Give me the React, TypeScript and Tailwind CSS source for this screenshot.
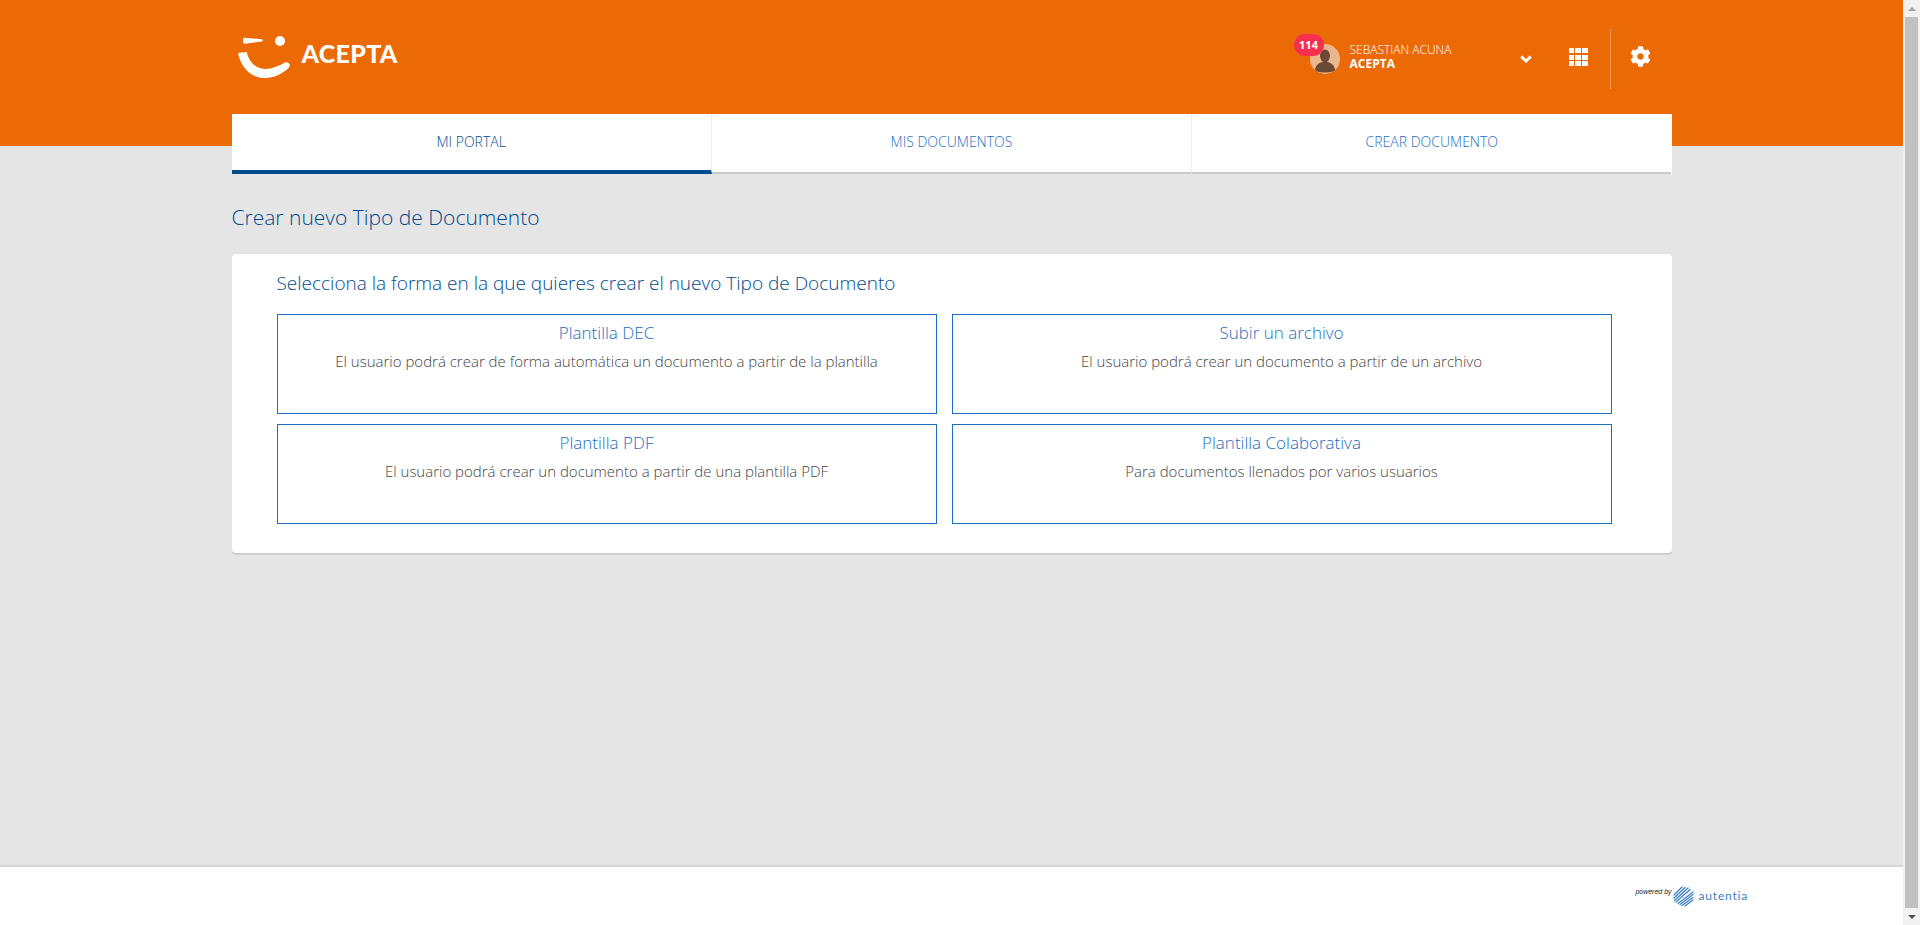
import { FaCog } from 'react-icons/fa';

const tabs = [
  { label: 'MI PORTAL', active: true },
  { label: 'MIS DOCUMENTOS', active: false },
  { label: 'CREAR DOCUMENTO', active: false },
];

const options = [
  { title: 'Plantilla DEC', text: 'El usuario podrá crear de forma automática un documento a partir de la plantilla' },
  { title: 'Subir un archivo', text: 'El usuario podrá crear un documento a partir de un archivo' },
  { title: 'Plantilla PDF', text: 'El usuario podrá crear un documento a partir de una plantilla PDF' },
  { title: 'Plantilla Colaborativa', text: 'Para documentos llenados por varios usuarios' },
];

function Logo() {
  return (
    <svg width="56" height="46" viewBox="0 0 56 46" fill="#fff">
      <path d="M5.3 2.7 L24 4.3 Q25.5 5.5 24 6.5 L7 8.7 Q5 8.5 5 7 Z" />
      <circle cx="42" cy="6" r="5" />
      <path d="M0 18 L8.7 17 C11 27 18 34 27 34 C34 34 41 31 47 27.5 Q49.5 26.5 51.5 29 Q52.5 31 50.5 33 C44 39 36 43 27 43 C13 43 3 33 0 18 Z" />
    </svg>
  );
}

function Avatar() {
  return (
    <div className="w-[30px] h-[30px] rounded-full bg-[#eab78f] overflow-hidden flex justify-center shrink-0">
      <svg width="24" height="30" viewBox="0 0 24 30">
        <ellipse cx="12" cy="12" rx="5" ry="6.5" fill="#6b4a35" />
        <path d="M2 27 C2 21 6 19 9 18 L15 18 C18 19 22 21 22 27 Q12 30 2 27 Z" fill="#6b4a35" />
      </svg>
    </div>
  );
}

function AppsGrid() {
  return (
    <div className="grid grid-cols-3 gap-[1.5px] w-[19px]">
      {Array.from({ length: 9 }).map((_, i) => (
        <div key={i} className="h-[5px] bg-white" />
      ))}
    </div>
  );
}

function AutentiaMark() {
  return (
    <svg width="21" height="21" viewBox="0 0 21 21" fill="none" stroke="#3b7fc4" strokeWidth="1.2" strokeLinecap="round">
      <path d="M1 9 L9 1" />
      <path d="M1 12 L12 1.5" />
      <path d="M1.5 14.5 L15 2" />
      <path d="M3 16 L17 3.5" />
      <path d="M5 17.5 L20 6" />
      <path d="M7 18.5 L20 8.5" />
      <path d="M9 19.5 L20 11.5" />
      <path d="M12 20 L20 14" />
    </svg>
  );
}

export default function App() {
  return (
    <div className="h-[925px] flex overflow-hidden font-['Open_Sans',sans-serif] bg-[#e5e5e5]">
      <div className="w-[1903px] flex flex-col">
        <header className="h-[146px] shrink-0 bg-[#ec6a06]">
          <div className="w-[1440px] mx-auto flex items-start">
            <div className="flex items-start gap-[8px] pl-[6px] pt-[35px]">
              <Logo />
              <span className="mt-[3px] text-[25px] leading-[30px] font-black text-white tracking-[0.3px] font-['Lato',sans-serif]">ACEPTA</span>
            </div>
            <div className="ml-auto flex items-start">
              <div className="relative mt-[44px] flex items-start">
                <span className="absolute -left-[16px] -top-[10px] w-[30px] text-center bg-[#f8304f] text-white text-[11px] leading-[22px] font-bold rounded-full">114</span>
                <Avatar />
                <div className="ml-[10px] w-[170px] -mt-[1px] text-white text-[12px] leading-[14px]">
                  <div className="font-light">SEBASTIAN ACUNA</div>
                  <div className="font-bold">ACEPTA</div>
                </div>
              </div>
              <svg className="mt-[55px]" width="12" height="8" viewBox="0 0 12 8" fill="none">
                <path d="M1.2 1.5 L6 6 L10.8 1.5" stroke="#fff" strokeWidth="3" />
              </svg>
              <div className="mt-[48px] ml-[37px]"><AppsGrid /></div>
              <div className="w-px h-[60px] bg-white/30 mt-[29px] ml-[22px]" />
              <FaCog className="mt-[46px] ml-[19px] mr-[21px]" size={21} color="#fff" />
            </div>
          </div>
        </header>

        <main className="flex-1 w-[1440px] mx-auto">
          <nav className="-mt-[32px] relative flex h-[60px] bg-white">
            {tabs.map((tab) => (
              <div
                key={tab.label}
                className={`flex-1 flex items-center justify-center text-[14px] font-light border-r border-[#eeeeee] last:border-r-0 ${tab.active ? 'border-b-4 border-b-[#004a8f] text-[#004a8f] pb-[2px]' : 'border-b-2 border-b-[#c9c9c9] text-[#1b6ec2] pb-[4px]'}`}
              >
                {tab.label}
              </div>
            ))}
          </nav>

          <h1 className="mt-[30px] text-[21px] leading-[27px] font-light text-[#004a8f]">Crear nuevo Tipo de Documento</h1>

          <section className="mt-[23px] h-[299px] bg-white rounded-[4px] shadow-[0_2px_0_#cfcfcf] pl-[45px] pr-[60px] pt-[17px]">
            <h2 className="text-[19px] leading-[24px] font-light text-[#004a8f]">Selecciona la forma en la que quieres crear el nuevo Tipo de Documento</h2>
            <div className="mt-[19px] grid grid-cols-2 gap-x-[15px] gap-y-[10px]">
              {options.map((opt) => (
                <div key={opt.title} className="h-[100px] border border-[#1b6ec2] text-center pt-[4px]">
                  <div className="text-[17px] leading-[28px] font-light text-[#1b6ec2]">{opt.title}</div>
                  <div className="mt-[4px] text-[15px] leading-[20px] font-light text-[#444444]">{opt.text}</div>
                </div>
              ))}
            </div>
          </section>
        </main>

        <footer className="h-[60px] shrink-0 bg-white border-t-2 border-[#d5d5d5] flex items-center justify-end pr-[155px]">
          <span className="text-[7px] italic font-medium text-[#222222] mr-[1px] -mt-[8px] font-['Liberation_Sans',sans-serif]">powered by</span>
          <AutentiaMark />
          <span className="ml-[5px] text-[12px] tracking-[0.8px] text-[#3b7fc4] font-['Lato',sans-serif]">autentia</span>
        </footer>
      </div>

      <div className="w-[17px] shrink-0 bg-[#f1f1f1] flex flex-col items-center">
        <div className="h-[17px] flex items-center justify-center">
          <div className="w-0 h-0 border-x-[4px] border-x-transparent border-b-[4px] border-b-[#a3a3a3]" />
        </div>
        <div className="flex-1 w-[13px] bg-[#c1c1c1]" />
        <div className="h-[17px] flex items-center justify-center">
          <div className="w-0 h-0 border-x-[4px] border-x-transparent border-t-[4px] border-t-[#505050]" />
        </div>
      </div>
    </div>
  );
}
